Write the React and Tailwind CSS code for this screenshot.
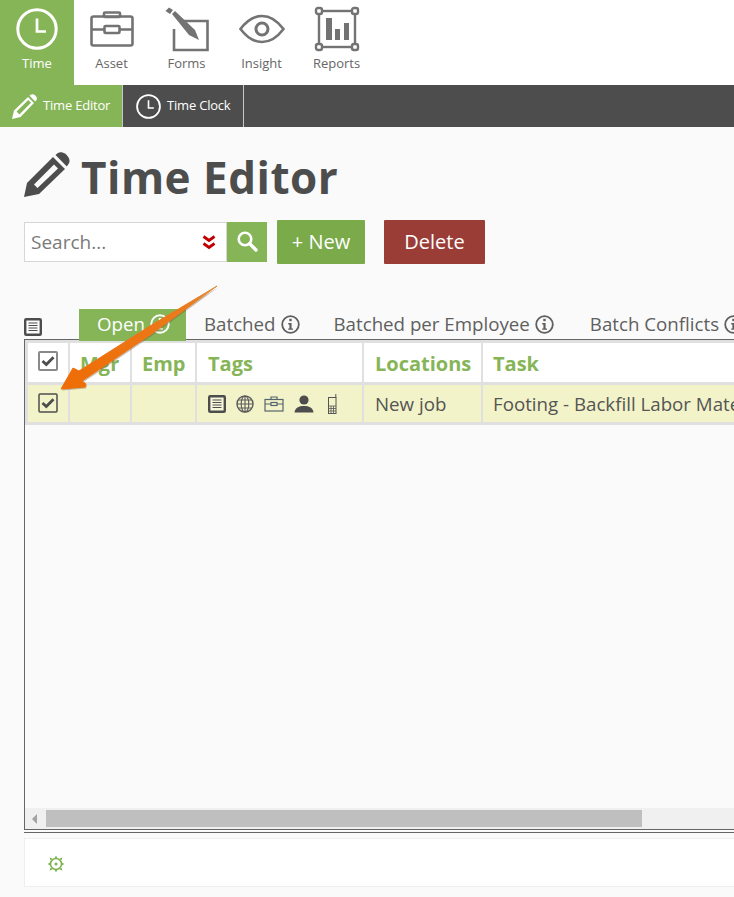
import React from "react";

function ClockIcon({ size = 42, sw = 3 }) {
  return (
    <svg width={size} height={size} viewBox="0 0 42 42" fill="none" stroke="#fff" strokeWidth={sw * 42 / size}>
      <circle cx="21" cy="21" r="19.2" />
      <path d="M21 10.5 V23.5 H30" strokeWidth={sw * 42 / size * 0.9} />
    </svg>
  );
}

function Asset() {
  return (
    <svg width="44" height="36" viewBox="0 0 44 36" fill="none" stroke="#737373" strokeWidth="2.6">
      <rect x="1.5" y="5.5" width="41" height="29" rx="2" />
      <path d="M1.5 18.5 H14 M30 18.5 H42.5" />
      <rect x="14" y="1.5" width="16" height="4.5" rx="1" />
      <rect x="14.5" y="15" width="15" height="7" rx="1" />
    </svg>
  );
}

function Forms() {
  return (
    <svg width="46" height="46" viewBox="0 0 46 46" fill="none">
      <path d="M16 15 H43.5 V44 H10 V23" stroke="#737373" strokeWidth="2.6" />
      <path d="M1.5 5 L5 1.5 L9 4 L6 8 Z" fill="#737373" />
      <path d="M8 8 L11 5 L31 24 L35 34 L25 29 Z" fill="#737373" />
    </svg>
  );
}

function Eye() {
  return (
    <svg width="46" height="30" viewBox="0 0 46 30" fill="none" stroke="#737373" strokeWidth="2.6">
      <path d="M1.5 15 C9 5 16 2 23 2 C30 2 37 5 44.5 15 C37 25 30 28 23 28 C16 28 9 25 1.5 15 Z" />
      <circle cx="23" cy="15" r="6" strokeWidth="3" />
    </svg>
  );
}

function Reports() {
  return (
    <svg width="46" height="46" viewBox="0 0 46 46" fill="none">
      <rect x="5" y="5" width="36" height="36" stroke="#737373" strokeWidth="2.4" />
      <g fill="#fff" stroke="#737373" strokeWidth="2.4">
        <rect x="2" y="2" width="6" height="6" rx="2" />
        <rect x="38" y="2" width="6" height="6" rx="2" />
        <rect x="2" y="38" width="6" height="6" rx="2" />
        <rect x="38" y="38" width="6" height="6" rx="2" />
      </g>
      <g fill="#737373">
        <rect x="12" y="12" width="6" height="22" />
        <rect x="21" y="23" width="5" height="11" />
        <rect x="30" y="17" width="5" height="17" />
      </g>
    </svg>
  );
}

function SolidPencil() {
  return (
    <svg width="25" height="25" viewBox="0 0 25 25" fill="#fff">
      <path fillRule="evenodd" d="M0 25 L2 16.5 L16 3 L22 9 L8.5 23 Z M4.6 17.5 L7.4 20.4 L19 8.8 L16.2 6 Z" />
      <path d="M17.5 1.8 L18.6 .8 C20 -.2 21.6 0 23 1.2 L23.8 2 C25.2 3.6 25.2 5 24.2 6.4 L23.2 7.6 Z" />
    </svg>
  );
}

function TitlePencil() {
  return (
    <svg width="46" height="46" viewBox="0 0 46 46" fill="#4d4d4d">
      <path fillRule="evenodd" d="M0 45 L3 31 L29 5 L41 17 L15 42 Z M10 32.5 L13.5 36 L34 16.5 L30 12.5 Z" />
      <path d="M31.5 3 L33.5 1.2 C35.5 -.3 38.5 -.3 41.5 1.8 L43.5 4 C46 7 46 10 44.5 12 L42.8 14.5 Z" />
    </svg>
  );
}

function Info({ size = 19 }) {
  return (
    <svg width={size} height={size} viewBox="0 0 19 19" fill="none" className="inline-block shrink-0">
      <circle cx="9.5" cy="9.5" r="8.3" stroke="currentColor" strokeWidth="1.8" />
      <rect x="8.3" y="3.8" width="2.4" height="2.4" fill="currentColor" />
      <path d="M7.2 8 H10.6 V13.4 H12 V14.8 H7.2 V13.4 H8.4 V9.4 H7.2 Z" fill="currentColor" />
    </svg>
  );
}

function DocIcon({ size = 18 }) {
  return (
    <svg width={size} height={size} viewBox="0 0 18 18" fill="none">
      <rect x="1.2" y="1.2" width="15.6" height="15.6" rx="1" fill="#fff" fillOpacity=".35" stroke="#4d4d4d" strokeWidth="2.4" />
      <path d="M4.5 5 H13.5 M4.5 7.5 H13.5 M4.5 10 H13.5 M4.5 12.5 H13.5" stroke="#4d4d4d" strokeWidth="1" />
    </svg>
  );
}

function Check({ size = 20, stroke = "#7a7a7a", sw = 1.5 }) {
  return (
    <svg width={size} height={size} viewBox="0 0 20 20" fill="none">
      <rect x="1" y="1" width="18" height="18" rx="1" fill="#fff" fillOpacity="0" stroke={stroke} strokeWidth={sw} />
      <path d="M4.5 10 L8.3 13.6 L15.5 6.3" stroke="#4d4d4d" strokeWidth="2.8" />
    </svg>
  );
}

function Globe() {
  return (
    <svg width="18" height="18" viewBox="0 0 18 18" fill="none" stroke="#5a5a5a" strokeWidth="1.1">
      <circle cx="9" cy="9" r="8" strokeWidth="1.4" />
      <ellipse cx="9" cy="9" rx="3.8" ry="8" />
      <path d="M9 1 V17 M1 9 H17 M2.2 5 H15.8 M2.2 13 H15.8" />
    </svg>
  );
}

function Brief() {
  return (
    <svg width="20" height="16" viewBox="0 0 20 16" fill="none" stroke="#55656c" strokeWidth="1.2">
      <rect x="1" y="3.5" width="18" height="11.5" />
      <path d="M7 3.5 V1 H13 V3.5 M1 8 H7 M13 8 H19" />
      <rect x="7" y="6.5" width="6" height="3" />
    </svg>
  );
}

function Person() {
  return (
    <svg width="20" height="18" viewBox="0 0 20 18" fill="#4d4d4d">
      <circle cx="10" cy="5" r="4.6" />
      <path d="M0.5 17.5 C1 12.5 5 11 10 11 C15 11 19 12.5 19.5 17.5 Z" />
    </svg>
  );
}

function Phone() {
  return (
    <svg width="10" height="20" viewBox="0 0 10 20" fill="none" stroke="#555" strokeWidth="1">
      <rect x="1.5" y="3.5" width="7.5" height="16" />
      <path d="M8.8 3.5 V0" />
      <path d="M1.5 12 H9 M1.5 14.5 H9 M1.5 17 H9 M4 12 V19.5 M6.5 12 V19.5" strokeWidth=".8" />
    </svg>
  );
}

function Gear() {
  return (
    <svg width="18" height="18" viewBox="0 0 18 18" fill="none">
      <circle cx="9" cy="9" r="5.5" stroke="#7fb24f" strokeWidth="1.5" />
      <circle cx="9" cy="9" r="1.5" fill="#7fb24f" />
      <path d="M7.6 3.2 L9 .6 L10.4 3.2 Z M7.6 14.8 L9 17.4 L10.4 14.8 Z M3.2 7.6 L.6 9 L3.2 10.4 Z M14.8 7.6 L17.4 9 L14.8 10.4 Z M3.5 5.5 L2.6 2.6 L5.5 3.5 Z M14.5 5.5 L15.4 2.6 L12.5 3.5 Z M3.5 12.5 L2.6 15.4 L5.5 14.5 Z M14.5 12.5 L15.4 15.4 L12.5 14.5 Z" fill="#7fb24f" />
    </svg>
  );
}

function NavItem({ icon, label, active }) {
  return (
    <div className={`h-[85px] relative flex flex-col items-center shrink-0 ${active ? "w-[74px] bg-[#86b558] text-white" : "w-[75px] text-[#666666]"}`}>
      <div className="h-[54px] flex items-center justify-center pt-[3px]">{icon}</div>
      <div className="absolute top-[54px] left-0 right-0 text-center text-[13px] leading-[18px]">{label}</div>
    </div>
  );
}

function Tab({ children, className = "" }) {
  return (
    <div className={`flex items-center gap-[5px] text-[18.72px] leading-[24px] text-[#5f5f5f] whitespace-nowrap shrink-0 pb-[2px] ${className}`}>
      {children}
    </div>
  );
}

function HeadCell({ w, children, className = "" }) {
  return (
    <div style={{ width: w }} className={`shrink-0 h-full bg-white flex items-center pl-[11px] text-[#86b558] font-bold text-[20px] whitespace-nowrap pt-[2px] ${className}`}>
      {children}
    </div>
  );
}

function BodyCell({ w, children, className = "" }) {
  return (
    <div style={{ width: w }} className={`shrink-0 h-full bg-[#f3f3c9] flex items-center pl-[11px] text-[#555555] text-[18.72px] whitespace-nowrap ${className}`}>
      {children}
    </div>
  );
}

export default function App() {
  return (
    <div className="relative w-[734px] h-[897px] overflow-hidden bg-[#fafafa] font-['Open_Sans',sans-serif]">
      <header className="flex h-[85px] bg-white pl-0">
        <NavItem active icon={<ClockIcon />} label="Time" />
        <NavItem icon={<Asset />} label="Asset" />
        <NavItem icon={<Forms />} label="Forms" />
        <NavItem icon={<Eye />} label="Insight" />
        <NavItem icon={<Reports />} label="Reports" />
      </header>

      <nav className="flex h-[42px] bg-[#4d4d4d] text-white text-[13px]">
        <div className="w-[122px] bg-[#86b558] flex items-center pl-[12px] gap-[6px] tracking-[-0.2px]">
          <SolidPencil /> <span>Time Editor</span>
        </div>
        <div className="w-[122px] border-x border-[#c8c8c8] flex items-center pl-[13px] gap-[6px] tracking-[-0.2px]">
          <ClockIcon size={25} sw={1.8} /> <span>Time Clock</span>
        </div>
      </nav>

      <main className="pl-[24px]">
        <div className="flex items-center h-[46px] mt-[25px] gap-[11px]">
          <TitlePencil />
          <h1 className="text-[44px] leading-[50px] font-bold text-[#4d4d4d] tracking-[0.5px] pt-[3px]">Time Editor</h1>
        </div>

        <div className="flex items-center h-[44px] mt-[22px]">
          <div className="flex items-center w-[203px] h-[40px] bg-white border border-[#d6d6d6] pl-[6px] pr-[10px] justify-between">
            <span className="text-[19px] text-[#7a7a7a]">Search...</span>
            <svg width="14" height="15" viewBox="0 0 14 15" fill="none" stroke="#c00000" strokeWidth="2.8">
              <path d="M1.5 1.5 L7 5.5 L12.5 1.5 M1.5 8.5 L7 12.5 L12.5 8.5" />
            </svg>
          </div>
          <div className="w-[40px] h-[40px] bg-[#86b558] flex items-center justify-center pb-[2px]">
            <svg width="22" height="22" viewBox="0 0 22 22" fill="none" stroke="#fff">
              <circle cx="9" cy="9" r="6.3" strokeWidth="2.6" />
              <path d="M13.6 13.6 L20 20" strokeWidth="3.4" strokeLinecap="round" />
            </svg>
          </div>
          <div className="ml-[10px] w-[88px] h-[44px] bg-[#7aaa4a] rounded-[1px] text-white text-[20px] flex items-center justify-center">+ New</div>
          <div className="ml-[19px] w-[101px] h-[44px] bg-[#993d36] rounded-[1px] text-white text-[20px] flex items-center justify-center">Delete</div>
        </div>

        <div className="relative z-10 flex items-end h-[32px] mt-[45px] -mb-[2px] whitespace-nowrap">
          <div className="w-[18px] h-[18px] mb-[5px] shrink-0"><DocIcon /></div>
          <div className="ml-[37px] w-[107px] h-[32px] shrink-0 bg-[#86b558] text-white flex items-center pl-[18px] gap-[5px] text-[18.72px] pb-[2px]">
            Open <Info size={20} />
          </div>
          <Tab className="ml-[18px] h-[32px]">Batched <Info /></Tab>
          <Tab className="ml-[34px] h-[32px]">Batched per Employee <Info /></Tab>
          <Tab className="ml-[36px] h-[32px]">Batch Conflicts <Info /></Tab>
        </div>

        <section className="h-[490px] border-t border-l border-[#666666] flex flex-col bg-[#fafafa]">
          <div className="flex flex-col flex-1 min-h-0">
            <div className="flex h-[42px] gap-[2px] pl-[3px] pt-[3px] bg-[#e0e0e0] shrink-0">
              <HeadCell w={40} className="!pl-[10px] !pt-0 pb-[3px]"><Check stroke="#8a8a8a" sw={2} /></HeadCell>
              <HeadCell w={60} className="!pl-[10px]">Mgr</HeadCell>
              <HeadCell w={63} className="!pl-[10px]">Emp</HeadCell>
              <HeadCell w={165} className="!pl-[11px]">Tags</HeadCell>
              <HeadCell w={117} className="!pl-[11px]">Locations</HeadCell>
              <HeadCell w={300} className="!pl-[10px]">Task</HeadCell>
            </div>
            <div className="flex h-[43px] gap-[2px] pl-[3px] py-[3px] bg-[#e0e0e0] shrink-0 overflow-hidden">
              <BodyCell w={40} className="!pl-[10px] pb-[2px]"><Check stroke="#4d4d4d" /></BodyCell>
              <BodyCell w={60} />
              <BodyCell w={63} />
              <BodyCell w={165} className="!pl-[11px] gap-[10px]">
                <DocIcon /><Globe /><Brief /><Person /><span className="ml-[3px] flex"><Phone /></span>
              </BodyCell>
              <BodyCell w={117} className="!pl-[11px] pt-[2px]">New job</BodyCell>
              <BodyCell w={300} className="!pl-[10px] pt-[2px]">Footing - Backfill Labor Mate</BodyCell>
            </div>
          </div>
          <div className="relative h-[21px] shrink-0 bg-[#f0f0f0] flex items-center pl-[21px]">
            <div className="absolute left-[7px] top-[6px] w-0 h-0 border-y-[5px] border-y-transparent border-r-[5px] border-r-[#a3a3a3]" />
            <div className="w-[596px] h-[17px] bg-[#bfbfbf]" />
          </div>
        </section>
        <div className="h-[4px] border-y border-[#666666]" />

        <footer className="mt-[5px] h-[49px] bg-white border-y border-l border-[#eeeeee] flex items-center pl-[22px] pt-[2px]">
          <Gear />
        </footer>
      </main>

      <svg className="absolute left-0 top-0 pointer-events-none z-20" width="734" height="897" viewBox="0 0 734 897">
        <defs>
          <linearGradient id="arrowFill" x1="217" y1="286" x2="60" y2="390" gradientUnits="userSpaceOnUse">
            <stop offset="0" stopColor="#e08a3a" />
            <stop offset="0.2" stopColor="#ec7a1c" />
            <stop offset="1" stopColor="#ee6c05" />
          </linearGradient>
        </defs>
        <polygon points="217,286 150,326 79,371 73,368 61,389 85,387 86,384 82,381 150,335" fill="#7a5a3c" opacity=".4" transform="translate(1 1.5)" />
        <polygon points="217,286 150,326 79,371 73,368 61,389 85,387 86,384 82,381 150,335" fill="url(#arrowFill)" stroke="url(#arrowFill)" strokeWidth="1" strokeLinejoin="round" />
      </svg>
    </div>
  );
}
